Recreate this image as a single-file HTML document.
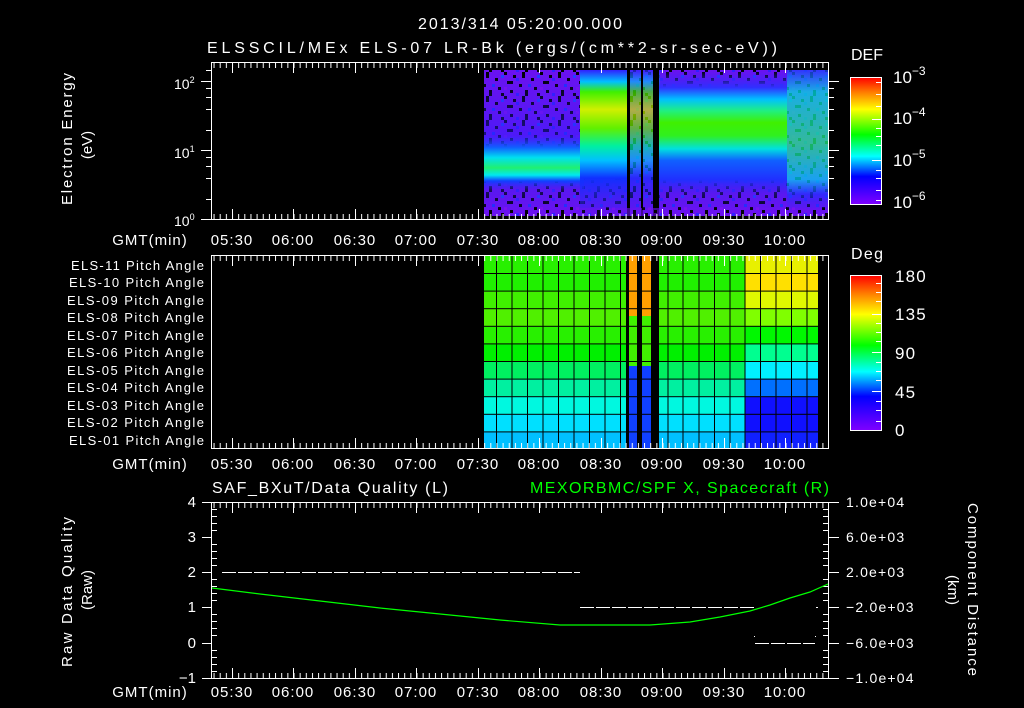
<!DOCTYPE html>
<html><head><meta charset="utf-8"><style>
html,body{margin:0;padding:0;background:#000;}
svg{display:block;}
text{font-family:"Liberation Sans",sans-serif;fill:#fff;}
.t{font-size:15px;letter-spacing:1px;}
.r{letter-spacing:1.2px;}
</style></head><body>
<svg width="1024" height="708" viewBox="0 0 1024 708" xmlns="http://www.w3.org/2000/svg">
<defs>
<pattern id="tk" x="232" y="0" width="6.15" height="708" patternUnits="userSpaceOnUse">
<rect x="0" y="0" width="1" height="708" fill="#fff"/></pattern>
<pattern id="noise" x="0" y="0" width="36" height="24" patternUnits="userSpaceOnUse">
<rect width="36" height="24" fill="#6a12f0"/>
<rect x="0" y="0" width="3" height="3" fill="#000"/><rect x="9" y="3" width="3" height="3" fill="#000"/>
<rect x="18" y="0" width="3" height="6" fill="#000"/><rect x="27" y="6" width="3" height="3" fill="#000"/>
<rect x="3" y="9" width="6" height="3" fill="#000"/><rect x="15" y="12" width="3" height="3" fill="#000"/>
<rect x="30" y="15" width="3" height="3" fill="#000"/><rect x="6" y="18" width="3" height="3" fill="#000"/>
<rect x="21" y="18" width="3" height="6" fill="#000"/><rect x="33" y="21" width="3" height="3" fill="#000"/>
<rect x="12" y="6" width="3" height="3" fill="#3020ff"/><rect x="24" y="12" width="3" height="3" fill="#2030ff"/>
<rect x="0" y="15" width="3" height="3" fill="#8010f0"/><rect x="33" y="3" width="3" height="3" fill="#2040ff"/>
<rect x="12" y="21" width="3" height="3" fill="#3020ff"/>
</pattern>
<linearGradient id="rb" x1="0" y1="0" x2="0" y2="1">
<stop offset="0" stop-color="#ff0000"/><stop offset="0.12" stop-color="#ff8000"/>
<stop offset="0.25" stop-color="#ffff00"/><stop offset="0.45" stop-color="#00ff00"/>
<stop offset="0.62" stop-color="#00ffff"/><stop offset="0.78" stop-color="#0000ff"/>
<stop offset="1" stop-color="#8000ff"/></linearGradient>
<linearGradient id="g1" x1="0" y1="70" x2="0" y2="216" gradientUnits="userSpaceOnUse">
<stop offset="0" stop-color="#4020f0" stop-opacity="0"/>
<stop offset="0.45" stop-color="#3020ff" stop-opacity="0.5"/>
<stop offset="0.53" stop-color="#1060ff"/>
<stop offset="0.6" stop-color="#00e0f0"/>
<stop offset="0.67" stop-color="#20f070"/>
<stop offset="0.72" stop-color="#00e8f0"/>
<stop offset="0.76" stop-color="#1040ff"/>
<stop offset="0.82" stop-color="#4020f0" stop-opacity="0.4"/>
<stop offset="1" stop-color="#4020f0" stop-opacity="0"/></linearGradient>
<linearGradient id="g2" x1="0" y1="70" x2="0" y2="216" gradientUnits="userSpaceOnUse">
<stop offset="0" stop-color="#3020ff"/>
<stop offset="0.08" stop-color="#00c0ff"/>
<stop offset="0.15" stop-color="#40f000"/>
<stop offset="0.27" stop-color="#d0f000"/>
<stop offset="0.4" stop-color="#60f000"/>
<stop offset="0.52" stop-color="#00f0a0"/>
<stop offset="0.62" stop-color="#00c0ff"/>
<stop offset="0.74" stop-color="#1030ff"/>
<stop offset="1" stop-color="#4020f0" stop-opacity="0.3"/></linearGradient>
<linearGradient id="g3" x1="0" y1="70" x2="0" y2="216" gradientUnits="userSpaceOnUse">
<stop offset="0" stop-color="#4020f0" stop-opacity="0"/>
<stop offset="0.12" stop-color="#3030ff"/>
<stop offset="0.2" stop-color="#00c0ff"/>
<stop offset="0.28" stop-color="#20f080"/>
<stop offset="0.36" stop-color="#40f000"/>
<stop offset="0.45" stop-color="#30f020"/>
<stop offset="0.54" stop-color="#00e0e0"/>
<stop offset="0.62" stop-color="#1060ff"/>
<stop offset="0.75" stop-color="#2030ff"/>
<stop offset="0.85" stop-color="#4020f0" stop-opacity="0.4"/>
<stop offset="1" stop-color="#4020f0" stop-opacity="0"/></linearGradient>
<linearGradient id="g4" x1="0" y1="70" x2="0" y2="216" gradientUnits="userSpaceOnUse">
<stop offset="0" stop-color="#2040ff"/>
<stop offset="0.15" stop-color="#00e0e0"/>
<stop offset="0.5" stop-color="#20f080"/>
<stop offset="0.75" stop-color="#00d0f0"/>
<stop offset="0.85" stop-color="#2030ff"/>
<stop offset="1" stop-color="#4020f0" stop-opacity="0"/></linearGradient>
</defs>

<!-- Titles -->
<text x="418" y="29" font-size="16" textLength="204" lengthAdjust="spacing">2013/314 05:20:00.000</text>
<text x="207" y="53" font-size="16" textLength="570" lengthAdjust="spacing">ELSSCIL/MEx ELS-07 LR-Bk  (ergs/(cm**2-sr-sec-eV))</text>

<!-- PANEL 1 -->
<rect x="484" y="70" width="345" height="146" fill="url(#noise)"/>
<rect x="484" y="70" width="100" height="146" fill="url(#g1)"/>
<rect x="580" y="70" width="48" height="146" fill="url(#g2)"/>
<rect x="630" y="70" width="30" height="146" fill="url(#g2)" opacity="0.7"/>
<rect x="659" y="70" width="128" height="146" fill="url(#g3)"/>
<rect x="787" y="70" width="42" height="146" fill="url(#g4)"/>
<rect x="787" y="70" width="42" height="146" fill="url(#noise)" opacity="0.25"/>
<rect x="627" y="62" width="3" height="158" fill="#000"/>
<rect x="641" y="62" width="2" height="158" fill="#000"/>
<rect x="653" y="62" width="6" height="158" fill="#000"/>
<rect x="484" y="208" width="345" height="8" fill="url(#noise)" opacity="0.6"/>
<rect x="211.5" y="62.5" width="617" height="157" fill="none" stroke="#fff" stroke-width="1"/>
<rect x="212" y="63" width="616" height="5" fill="url(#tk)"/>
<rect x="212" y="214" width="616" height="5" fill="url(#tk)"/>
<g fill="#fff">
<rect x="232" y="63" width="1" height="10"/><rect x="293" y="63" width="1" height="10"/><rect x="355" y="63" width="1" height="10"/><rect x="416" y="63" width="1" height="10"/><rect x="478" y="63" width="1" height="10"/><rect x="539" y="63" width="1" height="10"/><rect x="601" y="63" width="1" height="10"/><rect x="662" y="63" width="1" height="10"/><rect x="724" y="63" width="1" height="10"/><rect x="785" y="63" width="1" height="10"/>
<rect x="232" y="209" width="1" height="10"/><rect x="293" y="209" width="1" height="10"/><rect x="355" y="209" width="1" height="10"/><rect x="416" y="209" width="1" height="10"/><rect x="478" y="209" width="1" height="10"/><rect x="539" y="209" width="1" height="10"/><rect x="601" y="209" width="1" height="10"/><rect x="662" y="209" width="1" height="10"/><rect x="724" y="209" width="1" height="10"/><rect x="785" y="209" width="1" height="10"/>
<rect x="201" y="219" width="10" height="1"/><rect x="201" y="150" width="10" height="1"/><rect x="201" y="81" width="10" height="1"/>
<rect x="206" y="199" width="5" height="1"/><rect x="206" y="178" width="5" height="1"/><rect x="206" y="166" width="5" height="1"/><rect x="206" y="157" width="5" height="1"/>
<rect x="206" y="130" width="5" height="1"/><rect x="206" y="109" width="5" height="1"/><rect x="206" y="97" width="5" height="1"/><rect x="206" y="88" width="5" height="1"/><rect x="206" y="70" width="5" height="1"/>
<rect x="829" y="199" width="5" height="1"/><rect x="829" y="178" width="5" height="1"/><rect x="829" y="166" width="5" height="1"/><rect x="829" y="157" width="5" height="1"/><rect x="829" y="150" width="10" height="1"/>
<rect x="829" y="130" width="5" height="1"/><rect x="829" y="109" width="5" height="1"/><rect x="829" y="97" width="5" height="1"/><rect x="829" y="88" width="5" height="1"/><rect x="829" y="81" width="10" height="1"/>
</g>
<text x="174" y="89" font-size="14">10<tspan dy="-6" font-size="9">2</tspan></text>
<text x="174" y="158" font-size="14">10<tspan dy="-6" font-size="9">1</tspan></text>
<text x="174" y="226" font-size="14">10<tspan dy="-6" font-size="9">0</tspan></text>
<text transform="translate(72,205) rotate(-90)" font-size="15" textLength="132" lengthAdjust="spacing">Electron Energy</text>
<text transform="translate(92,145) rotate(-90)" font-size="15" text-anchor="middle">(eV)</text>
<g class="t" text-anchor="middle">
<text x="150" y="245">GMT(min)</text>
<text x="232" y="245">05:30</text><text x="293" y="245">06:00</text><text x="355" y="245">06:30</text><text x="416" y="245">07:00</text><text x="478" y="245">07:30</text><text x="539" y="245">08:00</text><text x="601" y="245">08:30</text><text x="662" y="245">09:00</text><text x="724" y="245">09:30</text><text x="785" y="245">10:00</text>
</g>
<text x="851" y="60" font-size="16" textLength="32" lengthAdjust="spacing">DEF</text>
<rect x="850.5" y="77.5" width="31" height="127" fill="url(#rb)" stroke="#fff"/>
<g fill="#fff"><rect x="876" y="82" width="5" height="1"/><rect x="876" y="94" width="5" height="1"/><rect x="876" y="106" width="5" height="1"/><rect x="872" y="119" width="9" height="1"/><rect x="876" y="128" width="5" height="1"/><rect x="876" y="136" width="5" height="1"/><rect x="876" y="145" width="5" height="1"/><rect x="872" y="160" width="9" height="1"/><rect x="876" y="170" width="5" height="1"/><rect x="876" y="178" width="5" height="1"/><rect x="876" y="190" width="5" height="1"/><rect x="876" y="200" width="5" height="1"/></g>
<g font-size="17"><text x="893" y="83">10<tspan dy="-8" font-size="12">−3</tspan></text>
<text x="893" y="124">10<tspan dy="-8" font-size="12">−4</tspan></text>
<text x="893" y="166">10<tspan dy="-8" font-size="12">−5</tspan></text>
<text x="893" y="208">10<tspan dy="-8" font-size="12">−6</tspan></text></g>

<!-- PANEL 2 -->
<g>
<rect x="484" y="256" width="145" height="17.6" fill="#28f000"/>
<rect x="484" y="273.6" width="145" height="17.6" fill="#20f000"/>
<rect x="484" y="291.2" width="145" height="17.6" fill="#40f000"/>
<rect x="484" y="308.8" width="145" height="17.6" fill="#50f000"/>
<rect x="484" y="326.4" width="145" height="17.6" fill="#28f000"/>
<rect x="484" y="344" width="145" height="17.6" fill="#00f000"/>
<rect x="484" y="361.6" width="145" height="17.6" fill="#00f060"/>
<rect x="484" y="379.2" width="145" height="17.6" fill="#00f0a0"/>
<rect x="484" y="396.8" width="145" height="17.6" fill="#00f8e0"/>
<rect x="484" y="414.4" width="145" height="17.6" fill="#00e0ff"/>
<rect x="484" y="432" width="145" height="17" fill="#00c0ff"/>
<rect x="629" y="256" width="22" height="60" fill="#ffa000"/>
<rect x="629" y="316" width="22" height="50" fill="#40f000"/>
<rect x="629" y="366" width="22" height="83" fill="#1040ff"/>
<rect x="659" y="256" width="86" height="17.6" fill="#28f000"/>
<rect x="659" y="273.6" width="86" height="17.6" fill="#20f000"/>
<rect x="659" y="291.2" width="86" height="17.6" fill="#40f000"/>
<rect x="659" y="308.8" width="86" height="17.6" fill="#50f000"/>
<rect x="659" y="326.4" width="86" height="17.6" fill="#28f000"/>
<rect x="659" y="344" width="86" height="17.6" fill="#00f000"/>
<rect x="659" y="361.6" width="86" height="17.6" fill="#00f060"/>
<rect x="659" y="379.2" width="86" height="17.6" fill="#00f0a0"/>
<rect x="659" y="396.8" width="86" height="17.6" fill="#00f8e0"/>
<rect x="659" y="414.4" width="86" height="17.6" fill="#00e0ff"/>
<rect x="659" y="432" width="86" height="17" fill="#00c0ff"/>
<rect x="745" y="256" width="73" height="17.6" fill="#e8f000"/>
<rect x="745" y="273.6" width="73" height="17.6" fill="#ffe000"/>
<rect x="745" y="291.2" width="73" height="17.6" fill="#e0f800"/>
<rect x="745" y="308.8" width="73" height="17.6" fill="#80ff00"/>
<rect x="745" y="326.4" width="73" height="17.6" fill="#00f800"/>
<rect x="745" y="344" width="73" height="17.6" fill="#00ff90"/>
<rect x="745" y="361.6" width="73" height="17.6" fill="#00f0ff"/>
<rect x="745" y="379.2" width="73" height="17.6" fill="#0070ff"/>
<rect x="745" y="396.8" width="73" height="17.6" fill="#1010ff"/>
<rect x="745" y="414.4" width="73" height="17.6" fill="#1010ff"/>
<rect x="745" y="432" width="73" height="17" fill="#1020ff"/>
<g fill="#000">
<rect x="626" y="256" width="3" height="193"/><rect x="637" y="256" width="5" height="193"/><rect x="651" y="256" width="8" height="193"/>
<rect x="496" y="256" width="1" height="193"/><rect x="511.5" y="256" width="1" height="193"/><rect x="527" y="256" width="1" height="193"/><rect x="542.5" y="256" width="1" height="193"/><rect x="558" y="256" width="1" height="193"/><rect x="573.5" y="256" width="1" height="193"/><rect x="589" y="256" width="1" height="193"/><rect x="604.5" y="256" width="1" height="193"/><rect x="620" y="256" width="1" height="193"/>
<rect x="667.5" y="256" width="1" height="193"/><rect x="682.5" y="256" width="1" height="193"/><rect x="698.5" y="256" width="1" height="193"/><rect x="714" y="256" width="1" height="193"/><rect x="729.5" y="256" width="1" height="193"/><rect x="744.5" y="256" width="1" height="193"/><rect x="760" y="256" width="1" height="193"/><rect x="775.5" y="256" width="1" height="193"/><rect x="791" y="256" width="1" height="193"/><rect x="806.5" y="256" width="1" height="193"/>
<rect x="484" y="273" width="334" height="1"/><rect x="484" y="290.6" width="334" height="1"/><rect x="484" y="308.2" width="334" height="1"/><rect x="484" y="325.8" width="334" height="1"/><rect x="484" y="343.4" width="334" height="1"/><rect x="484" y="361" width="334" height="1"/><rect x="484" y="378.6" width="334" height="1"/><rect x="484" y="396.2" width="334" height="1"/><rect x="484" y="413.8" width="334" height="1"/><rect x="484" y="431.4" width="334" height="1"/>
</g>
</g>
<rect x="211.5" y="255.5" width="617" height="193" fill="none" stroke="#fff"/>
<rect x="212" y="256" width="616" height="5" fill="url(#tk)"/>
<rect x="212" y="443" width="616" height="5" fill="url(#tk)"/>
<g fill="#fff">
<rect x="232" y="256" width="1" height="10"/><rect x="293" y="256" width="1" height="10"/><rect x="355" y="256" width="1" height="10"/><rect x="416" y="256" width="1" height="10"/><rect x="478" y="256" width="1" height="10"/><rect x="539" y="256" width="1" height="10"/><rect x="601" y="256" width="1" height="10"/><rect x="662" y="256" width="1" height="10"/><rect x="724" y="256" width="1" height="10"/><rect x="785" y="256" width="1" height="10"/>
<rect x="232" y="438" width="1" height="10"/><rect x="293" y="438" width="1" height="10"/><rect x="355" y="438" width="1" height="10"/><rect x="416" y="438" width="1" height="10"/><rect x="478" y="438" width="1" height="10"/><rect x="539" y="438" width="1" height="10"/><rect x="601" y="438" width="1" height="10"/><rect x="662" y="438" width="1" height="10"/><rect x="724" y="438" width="1" height="10"/><rect x="785" y="438" width="1" height="10"/>
</g>
<g font-size="13">
<text x="71" y="270" textLength="133" lengthAdjust="spacing">ELS-11 Pitch Angle</text>
<text x="69" y="287" textLength="135" lengthAdjust="spacing">ELS-10 Pitch Angle</text>
<text x="67" y="305" textLength="137" lengthAdjust="spacing">ELS-09 Pitch Angle</text>
<text x="67" y="322" textLength="137" lengthAdjust="spacing">ELS-08 Pitch Angle</text>
<text x="67" y="340" textLength="137" lengthAdjust="spacing">ELS-07 Pitch Angle</text>
<text x="67" y="357" textLength="137" lengthAdjust="spacing">ELS-06 Pitch Angle</text>
<text x="67" y="375" textLength="137" lengthAdjust="spacing">ELS-05 Pitch Angle</text>
<text x="67" y="392" textLength="137" lengthAdjust="spacing">ELS-04 Pitch Angle</text>
<text x="67" y="410" textLength="137" lengthAdjust="spacing">ELS-03 Pitch Angle</text>
<text x="67" y="427" textLength="137" lengthAdjust="spacing">ELS-02 Pitch Angle</text>
<text x="69" y="445" textLength="135" lengthAdjust="spacing">ELS-01 Pitch Angle</text>
</g>
<g class="t" text-anchor="middle">
<text x="150" y="469">GMT(min)</text>
<text x="232" y="469">05:30</text><text x="293" y="469">06:00</text><text x="355" y="469">06:30</text><text x="416" y="469">07:00</text><text x="478" y="469">07:30</text><text x="539" y="469">08:00</text><text x="601" y="469">08:30</text><text x="662" y="469">09:00</text><text x="724" y="469">09:30</text><text x="785" y="469">10:00</text>
</g>
<text x="851" y="259" font-size="16" textLength="32" lengthAdjust="spacing">Deg</text>
<rect x="850.5" y="275.5" width="31" height="155" fill="url(#rb)" stroke="#fff"/>
<g fill="#fff"><rect x="876" y="283" width="5" height="1"/><rect x="876" y="292" width="5" height="1"/><rect x="876" y="301" width="5" height="1"/><rect x="872" y="314" width="9" height="1"/><rect x="876" y="323" width="5" height="1"/><rect x="876" y="332" width="5" height="1"/><rect x="876" y="341" width="5" height="1"/><rect x="872" y="352" width="9" height="1"/><rect x="876" y="362" width="5" height="1"/><rect x="876" y="371" width="5" height="1"/><rect x="876" y="380" width="5" height="1"/><rect x="872" y="391" width="9" height="1"/><rect x="876" y="401" width="5" height="1"/><rect x="876" y="410" width="5" height="1"/><rect x="876" y="421" width="5" height="1"/></g>
<g font-size="17" class="r"><text x="895" y="282">180</text><text x="895" y="320">135</text><text x="895" y="359">90</text><text x="895" y="398">45</text><text x="895" y="436">0</text></g>

<!-- PANEL 3 -->
<text x="212" y="493" font-size="16" textLength="236" lengthAdjust="spacing">SAF_BXuT/Data Quality (L)</text>
<text x="530" y="493" font-size="16" textLength="299" lengthAdjust="spacing" style="fill:#00ff00">MEXORBMC/SPF X, Spacecraft (R)</text>
<rect x="211.5" y="502.5" width="617" height="176" fill="none" stroke="#fff"/>
<rect x="212" y="503" width="616" height="5" fill="url(#tk)"/>
<rect x="212" y="673" width="616" height="5" fill="url(#tk)"/>
<g fill="#fff">
<rect x="232" y="503" width="1" height="10"/><rect x="293" y="503" width="1" height="10"/><rect x="355" y="503" width="1" height="10"/><rect x="416" y="503" width="1" height="10"/><rect x="478" y="503" width="1" height="10"/><rect x="539" y="503" width="1" height="10"/><rect x="601" y="503" width="1" height="10"/><rect x="662" y="503" width="1" height="10"/><rect x="724" y="503" width="1" height="10"/><rect x="785" y="503" width="1" height="10"/>
<rect x="232" y="668" width="1" height="10"/><rect x="293" y="668" width="1" height="10"/><rect x="355" y="668" width="1" height="10"/><rect x="416" y="668" width="1" height="10"/><rect x="478" y="668" width="1" height="10"/><rect x="539" y="668" width="1" height="10"/><rect x="601" y="668" width="1" height="10"/><rect x="662" y="668" width="1" height="10"/><rect x="724" y="668" width="1" height="10"/><rect x="785" y="668" width="1" height="10"/>
<rect x="202" y="502" width="10" height="1"/><rect x="202" y="537" width="10" height="1"/><rect x="202" y="572" width="10" height="1"/><rect x="202" y="607" width="10" height="1"/><rect x="202" y="643" width="10" height="1"/><rect x="202" y="678" width="10" height="1"/>
<rect x="212" y="509" width="5" height="1"/><rect x="212" y="516" width="5" height="1"/><rect x="212" y="523" width="5" height="1"/><rect x="212" y="530" width="5" height="1"/><rect x="212" y="544" width="5" height="1"/><rect x="212" y="551" width="5" height="1"/><rect x="212" y="558" width="5" height="1"/><rect x="212" y="565" width="5" height="1"/><rect x="212" y="579" width="5" height="1"/><rect x="212" y="586" width="5" height="1"/><rect x="212" y="593" width="5" height="1"/><rect x="212" y="600" width="5" height="1"/><rect x="212" y="614" width="5" height="1"/><rect x="212" y="621" width="5" height="1"/><rect x="212" y="628" width="5" height="1"/><rect x="212" y="635" width="5" height="1"/><rect x="212" y="650" width="5" height="1"/><rect x="212" y="657" width="5" height="1"/><rect x="212" y="664" width="5" height="1"/><rect x="212" y="671" width="5" height="1"/>
<rect x="829" y="502" width="10" height="1"/><rect x="829" y="537" width="10" height="1"/><rect x="829" y="572" width="10" height="1"/><rect x="829" y="607" width="10" height="1"/><rect x="829" y="643" width="10" height="1"/><rect x="829" y="678" width="10" height="1"/>
<rect x="823" y="509" width="5" height="1"/><rect x="823" y="516" width="5" height="1"/><rect x="823" y="523" width="5" height="1"/><rect x="823" y="530" width="5" height="1"/><rect x="823" y="544" width="5" height="1"/><rect x="823" y="551" width="5" height="1"/><rect x="823" y="558" width="5" height="1"/><rect x="823" y="565" width="5" height="1"/><rect x="823" y="579" width="5" height="1"/><rect x="823" y="586" width="5" height="1"/><rect x="823" y="593" width="5" height="1"/><rect x="823" y="600" width="5" height="1"/><rect x="823" y="614" width="5" height="1"/><rect x="823" y="621" width="5" height="1"/><rect x="823" y="628" width="5" height="1"/><rect x="823" y="635" width="5" height="1"/><rect x="823" y="650" width="5" height="1"/><rect x="823" y="657" width="5" height="1"/><rect x="823" y="664" width="5" height="1"/><rect x="823" y="671" width="5" height="1"/>
</g>
<line x1="222" y1="572.5" x2="580" y2="572.5" stroke="#fff" stroke-dasharray="14,2"/>
<line x1="580" y1="607.5" x2="754" y2="607.5" stroke="#fff" stroke-dasharray="14,2"/>
<line x1="755" y1="643.5" x2="815" y2="643.5" stroke="#fff" stroke-dasharray="14,2"/>
<rect x="816" y="607" width="2" height="1" fill="#fff"/><rect x="754" y="636" width="1" height="1" fill="#fff"/><rect x="815" y="636" width="1" height="1" fill="#fff"/>
<polyline fill="none" stroke="#00ff00" stroke-width="1.2" points="212,588 260,594 320,601 380,608 440,614 500,620 560,625 650,625 690,622 720,617 750,611 770,605 790,598 810,592 828,584"/>
<g font-size="15" text-anchor="end"><text x="196" y="507">4</text><text x="196" y="542">3</text><text x="196" y="577">2</text><text x="196" y="612">1</text><text x="196" y="648">0</text><text x="196" y="683">−1</text></g>
<g font-size="14" class="r"><text x="846" y="507">1.0e+04</text><text x="846" y="542">6.0e+03</text><text x="846" y="577">2.0e+03</text><text x="846" y="612">−2.0e+03</text><text x="846" y="648">−6.0e+03</text><text x="846" y="683">−1.0e+04</text></g>
<text transform="translate(72,667) rotate(-90)" font-size="15" textLength="150" lengthAdjust="spacing">Raw Data Quality</text>
<text transform="translate(92,590) rotate(-90)" font-size="15" text-anchor="middle">(Raw)</text>
<text transform="translate(968,503) rotate(90)" font-size="15" textLength="173" lengthAdjust="spacing">Component Distance</text>
<text transform="translate(948,590) rotate(90)" font-size="15" text-anchor="middle">(km)</text>
<g class="t" text-anchor="middle">
<text x="150" y="697">GMT(min)</text>
<text x="232" y="697">05:30</text><text x="293" y="697">06:00</text><text x="355" y="697">06:30</text><text x="416" y="697">07:00</text><text x="478" y="697">07:30</text><text x="539" y="697">08:00</text><text x="601" y="697">08:30</text><text x="662" y="697">09:00</text><text x="724" y="697">09:30</text><text x="785" y="697">10:00</text>
</g>
</svg>
</body></html>
